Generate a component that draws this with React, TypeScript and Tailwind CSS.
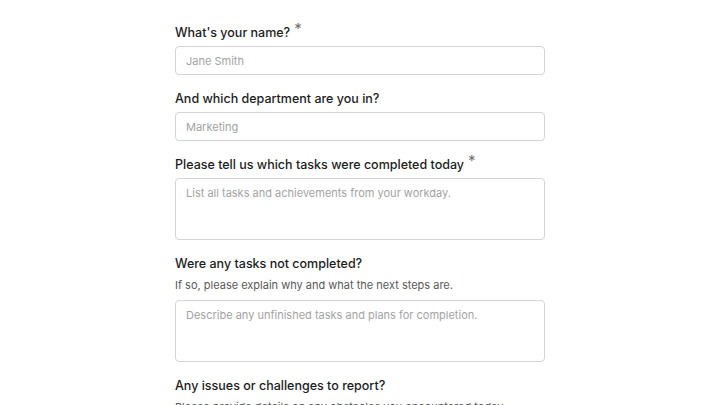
const inputCls =
  'h-[29px] w-full rounded-[4px] border border-[#d4d4d4] px-[10px] text-[11px] text-[#1f2937] placeholder:text-[#a3a3a3] outline-none';
const areaCls =
  'block h-[62px] w-full resize-none rounded-[4px] border border-[#d4d4d4] px-[10px] py-[6px] text-[11px] leading-[16px] text-[#1f2937] placeholder:text-[#a3a3a3] outline-none';

export default function App() {
  return (
    <div className="min-h-screen bg-white" style={{ fontFamily: 'Inter, "Noto Sans", sans-serif' }}>
      <form className="mx-auto flex w-[370px] flex-col gap-[14px] pt-[23px]">
        <Field label="What's your name?" required>
          <input className={inputCls} placeholder="Jane Smith" />
        </Field>
        <Field label="And which department are you in?">
          <input className={inputCls} placeholder="Marketing" />
        </Field>
        <Field label="Please tell us which tasks were completed today" required>
          <textarea className={areaCls} placeholder="List all tasks and achievements from your workday." />
        </Field>
        <Field
          label="Were any tasks not completed?"
          hint="If so, please explain why and what the next steps are."
        >
          <textarea className={areaCls} placeholder="Describe any unfinished tasks and plans for completion." />
        </Field>
        <Field
          label="Any issues or challenges to report?"
          hint="Please provide details on any obstacles you encountered today."
        >
          <textarea className={areaCls} placeholder="Share any problems that came up." />
        </Field>
      </form>
    </div>
  );
}

function Field({
  label,
  hint,
  required = false,
  children
}: {
  label: string;
  hint?: string;
  required?: boolean;
  children: React.ReactNode;
}) {
  return (
    <div className="flex flex-col">
      <label className="mb-[3px] text-[12.5px] leading-[20px] font-medium text-[#1c1c1c]">
        {label}
        {required && (
          <span className="relative -top-[3px] ml-[4px] text-[15px] leading-none font-normal text-[#707070]">*</span>
        )}
      </label>
      {hint && <p className="mb-[7px] text-[11px] leading-[16px] text-[#595959]">{hint}</p>}
      {children}
    </div>
  );
}
